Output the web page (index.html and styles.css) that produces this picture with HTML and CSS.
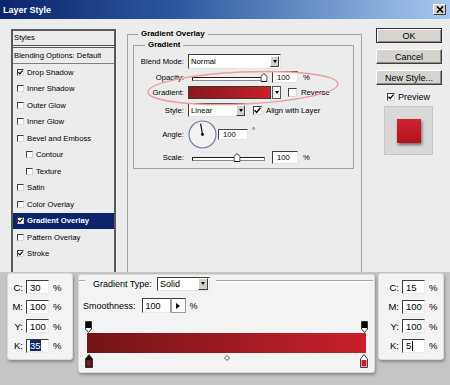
FILE: index.html
```html
<!DOCTYPE html>
<html lang="en">
<head>
    <meta charset="UTF-8">
    <meta name="viewport" content="width=device-width, initial-scale=1.0">
    <link rel="stylesheet" href="styles.css">
    <title>Layer Style - Gradient Overlay</title>
</head>
<body>

    <!-- Dialog window -->
    <div class="window">
        <div class="titlebar">
            <span>Layer Style</span>
            <span class="close-btn"><svg width="8" height="7" viewBox="0 0 8 7"><path d="M1 0.5 L7 6.5 M7 0.5 L1 6.5" stroke="#000" stroke-width="1.6"/></svg></span>
        </div>

        <div class="dialog">
            <!-- Styles list -->
            <div class="styles-list">
                <div class="list-head">Styles</div>
                <div class="list-blend">Blending Options: Default</div>
                <div class="list-item"><span class="chk"><svg width="5" height="5" viewBox="0 0 5 5"><path d="M0.4 2.2 L1.9 3.9 L4.6 0.5" fill="none" stroke="#000" stroke-width="1.2"/></svg></span>Drop Shadow</div>
                <div class="list-item"><span class="chk"></span>Inner Shadow</div>
                <div class="list-item"><span class="chk"></span>Outer Glow</div>
                <div class="list-item"><span class="chk"></span>Inner Glow</div>
                <div class="list-item"><span class="chk"></span>Bevel and Emboss</div>
                <div class="list-item sub"><span class="chk"></span>Contour</div>
                <div class="list-item sub"><span class="chk"></span>Texture</div>
                <div class="list-item"><span class="chk"></span>Satin</div>
                <div class="list-item"><span class="chk"></span>Color Overlay</div>
                <div class="list-item active"><span class="chk"><svg width="5" height="5" viewBox="0 0 5 5"><path d="M0.4 2.2 L1.9 3.9 L4.6 0.5" fill="none" stroke="#000" stroke-width="1.2"/></svg></span>Gradient Overlay</div>
                <div class="list-item"><span class="chk"></span>Pattern Overlay</div>
                <div class="list-item"><span class="chk"><svg width="5" height="5" viewBox="0 0 5 5"><path d="M0.4 2.2 L1.9 3.9 L4.6 0.5" fill="none" stroke="#000" stroke-width="1.2"/></svg></span>Stroke</div>
            </div>

            <!-- Gradient Overlay settings -->
            <fieldset class="group outer">
                <legend>Gradient Overlay</legend>
                <fieldset class="group inner">
                    <legend>Gradient</legend>

                    <div class="row row-blend">
                        <span class="lbl">Blend Mode:</span>
                        <div class="select sel-blend"><span>Normal</span><span class="drop"></span></div>
                    </div>

                    <div class="row row-opacity">
                        <span class="lbl">Opacity:</span>
                        <div class="slider slider-opacity">
                            <div class="track"></div>
                            <span class="thumb" style="left: 96%"><svg width="7" height="9" viewBox="0 0 7 9"><path d="M0.5 8.5 V3.5 L3.5 0.5 L6.5 3.5 V8.5 Z" fill="#fff" stroke="#222"/></svg></span>
                        </div>
                        <div class="field field-pct">100</div>
                        <span class="unit">%</span>
                    </div>

                    <div class="row row-gradient">
                        <span class="lbl">Gradient:</span>
                        <div class="grad-swatch"></div>
                        <span class="drop-sm"></span>
                        <span class="chk big gap-rev"></span>
                        <span class="chk-text">Reverse</span>
                    </div>

                    <div class="row row-style">
                        <span class="lbl">Style:</span>
                        <div class="select sel-style"><span>Linear</span><span class="drop"></span></div>
                        <span class="chk big gap-align"><svg width="7" height="7" viewBox="0 0 7 7"><path d="M0.6 3.2 L2.6 5.4 L6.4 0.8" fill="none" stroke="#000" stroke-width="1.4"/></svg></span>
                        <span class="chk-text">Align with Layer</span>
                    </div>

                    <div class="row row-angle">
                        <span class="lbl">Angle:</span>
                        <svg class="dial" width="29" height="29" viewBox="0 0 29 29">
                            <circle cx="14.5" cy="14.5" r="13.5" fill="#f2f2f2" stroke="#6d7fa0" stroke-width="1.2"/>
                            <path d="M14.5 14.5 L12.6 3.6" stroke="#111" stroke-width="1.2"/>
                            <circle cx="14.5" cy="14.5" r="1.4" fill="#000"/>
                        </svg>
                        <div class="field field-angle">100</div>
                        <span class="deg">°</span>
                    </div>

                    <div class="row row-scale">
                        <span class="lbl">Scale:</span>
                        <div class="slider slider-scale">
                            <div class="track"></div>
                            <span class="thumb" style="left: 62%"><svg width="7" height="9" viewBox="0 0 7 9"><path d="M0.5 8.5 V3.5 L3.5 0.5 L6.5 3.5 V8.5 Z" fill="#fff" stroke="#222"/></svg></span>
                        </div>
                        <div class="field field-scale">100</div>
                        <span class="unit">%</span>
                    </div>
                </fieldset>
            </fieldset>

            <!-- Buttons and preview -->
            <div class="side">
                <div class="btn default">OK</div>
                <div class="btn">Cancel</div>
                <div class="btn">New Style...</div>
                <div class="preview-row">
                    <span class="chk mid"><svg width="6" height="6" viewBox="0 0 6 6"><path d="M0.5 2.7 L2.2 4.6 L5.5 0.7" fill="none" stroke="#000" stroke-width="1.3"/></svg></span>
                    <span>Preview</span>
                </div>
                <div class="preview-box"><div class="preview-square"></div></div>
            </div>
        </div>
    </div>

    <!-- Colour callouts -->
    <div class="callouts">
        <div class="panel cmyk">
            <div class="cmyk-row"><span class="cl">C:</span><span class="cf">30</span><span class="cu">%</span></div>
            <div class="cmyk-row"><span class="cl">M:</span><span class="cf">100</span><span class="cu">%</span></div>
            <div class="cmyk-row"><span class="cl">Y:</span><span class="cf">100</span><span class="cu">%</span></div>
            <div class="cmyk-row"><span class="cl">K:</span><span class="cf"><span class="selected">35</span></span><span class="cu">%</span></div>
        </div>

        <div class="panel editor">
            <div class="type-row">
                <span class="rule rule-short"></span>
                <span class="type-label">Gradient Type:</span>
                <div class="select sel-type"><span>Solid</span><span class="drop drop-type"></span></div>
                <span class="rule rule-long"></span>
            </div>
            <div class="smooth-row">
                <span>Smoothness:</span>
                <div class="smooth-field">100</div>
                <span class="smooth-btn"></span>
                <span class="smooth-unit">%</span>
            </div>
            <div class="gradient-edit">
                <div class="stops">
                    <svg width="7" height="12" viewBox="0 0 7 12"><path d="M0.5 0.5 H6.5 V8 L3.5 11.5 L0.5 8 Z" fill="#fff" stroke="#333"/><rect x="1" y="1" width="5" height="6" fill="#000"/></svg>
                    <svg width="7" height="12" viewBox="0 0 7 12"><path d="M0.5 0.5 H6.5 V8 L3.5 11.5 L0.5 8 Z" fill="#fff" stroke="#333"/><rect x="1" y="1" width="5" height="6" fill="#000"/></svg>
                </div>
                <div class="gradient-bar"></div>
                <div class="stops stops-bottom">
                    <svg width="8" height="14" viewBox="0 0 8 14"><path d="M4 0.5 L7.5 5 V13.5 H0.5 V5 Z" fill="#111" stroke="#333"/><rect x="1.5" y="6" width="5" height="6.5" fill="#7e1a1d"/></svg>
                    <svg class="midpoint" width="6" height="6" viewBox="0 0 6 6"><path d="M3 0.5 L5.5 3 L3 5.5 L0.5 3 Z" fill="#fff" stroke="#555"/></svg>
                    <svg width="8" height="14" viewBox="0 0 8 14"><path d="M4 0.5 L7.5 5 V13.5 H0.5 V5 Z" fill="#fff" stroke="#444"/><rect x="1.5" y="6" width="5" height="6.5" fill="#c8202a"/></svg>
                </div>
            </div>
        </div>

        <div class="panel cmyk cmyk-right">
            <div class="cmyk-row"><span class="cl">C:</span><span class="cf">15</span><span class="cu">%</span></div>
            <div class="cmyk-row"><span class="cl">M:</span><span class="cf">100</span><span class="cu">%</span></div>
            <div class="cmyk-row"><span class="cl">Y:</span><span class="cf">100</span><span class="cu">%</span></div>
            <div class="cmyk-row"><span class="cl">K:</span><span class="cf">5<span class="caret"></span></span><span class="cu">%</span></div>
        </div>
    </div>

    <!-- Highlight ring round the gradient row -->
    <svg class="highlight-ring" width="200" height="42" viewBox="0 0 200 42">
        <ellipse cx="100" cy="21" rx="95" ry="16" transform="rotate(-2.5 100 21)" fill="none" stroke="#ec9d9d" stroke-width="1.5"/>
    </svg>

</body>
</html>
```

FILE: styles.css
```css
* {
    box-sizing: border-box;
}

body {
    margin: 0;
    width: 450px;
    height: 385px;
    overflow: hidden;
    position: relative;
    background: #c5c5c5;
    font-family: "Liberation Sans", Arial, sans-serif;
    color: #000;
}

/* Window frame */
.window {
    height: 272px;
    background: #ececec;
    overflow: hidden;
}

.titlebar {
    height: 19px;
    padding: 0 4px 0 3px;
    display: flex;
    align-items: center;
    justify-content: space-between;
    background: linear-gradient(90deg, #0a246a 0%, #2d5aa0 40%, #a6caf0 100%);
    color: #fff;
    font-size: 9px;
    font-weight: bold;
}

.close-btn {
    width: 13px;
    height: 11px;
    display: flex;
    align-items: center;
    justify-content: center;
    background: #d4d0c8;
    border: 1px solid;
    border-color: #fff #404040 #404040 #fff;
}

.dialog {
    display: flex;
    align-items: flex-start;
    font-size: 7.7px;
}

/* Styles list */
.styles-list {
    margin: 10px 0 0 11px;
    width: 105px;
    height: 270px;
    flex-shrink: 0;
    border: 2px solid #5a5a5a;
    background: #ececec;
}

.list-head {
    height: 17px;
    line-height: 14px;
    padding-left: 1px;
    border-bottom: 3px double #555;
}

.list-blend {
    height: 16px;
    line-height: 15px;
    padding-left: 1px;
    border-bottom: 1px solid #808080;
}

.list-item {
    height: 16.5px;
    display: flex;
    align-items: center;
    padding-left: 4px;
}

.list-item.sub {
    padding-left: 13px;
}

.list-item.active {
    background: #0a246a;
    color: #fff;
    font-weight: bold;
}

.chk {
    width: 7px;
    height: 7px;
    margin-right: 3px;
    flex-shrink: 0;
    display: flex;
    align-items: center;
    justify-content: center;
    background: #fff;
    border: 1px solid;
    border-color: #404040 #d8d8d8 #d8d8d8 #404040;
}

.chk.big {
    width: 9px;
    height: 9px;
    margin-right: 4px;
}

.chk.mid {
    width: 8px;
    height: 8px;
    margin-right: 3px;
}

/* Group boxes */
.group {
    margin: 0;
    padding: 0;
    min-width: 0;
    border: 1px solid #a3a3a3;
}

.group legend {
    margin-left: 10px;
    padding: 0 3px;
    font-weight: bold;
    font-size: 7.9px;
    line-height: 10px;
}

.outer {
    margin: 10px 0 0 11px;
    width: 235px;
    height: 260px;
    flex-shrink: 0;
}

.inner {
    margin: 1px 7px 0 5px;
    height: 129px;
}

.inner legend {
    margin-left: 11px;
}

.row {
    display: flex;
    align-items: center;
}

.lbl {
    width: 50px;
    margin-right: 4px;
    text-align: right;
    flex-shrink: 0;
}

.row-blend { margin-top: 3px; height: 16px; }
.row-opacity { height: 16px; }
.row-gradient { height: 15px; }
.row-style { margin-top: 2px; height: 16px; }
.row-angle { height: 32px; }
.row-scale { height: 14px; }

.select {
    height: 15px;
    display: flex;
    align-items: center;
    justify-content: space-between;
    padding: 0 1px 0 2px;
    background: #fff;
    border: 1px solid;
    border-color: #404040 #e4e4e4 #e4e4e4 #404040;
}

.sel-blend { width: 93px; }
.sel-style { width: 59px; height: 14px; }

.drop {
    width: 9px;
    height: 11px;
    display: flex;
    align-items: center;
    justify-content: center;
    background: #d4d0c8;
    border: 1px solid;
    border-color: #fff #404040 #404040 #fff;
}

.drop::after,
.drop-sm::after {
    content: "";
    border-left: 2.5px solid transparent;
    border-right: 2.5px solid transparent;
    border-top: 3px solid #000;
}

.slider {
    position: relative;
    height: 9px;
    display: flex;
    align-items: center;
    padding-top: 4px;
}

.slider-opacity { margin-left: 4px; width: 75px; }
.slider-scale { margin-left: 4px; width: 73px; }

.track {
    width: 100%;
    height: 4px;
    background: #fff;
    border: 1px solid;
    border-color: #1e1e1e #8a8a8a #8a8a8a #1e1e1e;
}

.thumb {
    position: absolute;
    top: 0;
    transform: translateX(-50%);
    display: flex;
}

.field {
    height: 12px;
    display: flex;
    align-items: center;
    padding-left: 4px;
    background: #fff;
    border: 1px solid;
    border-color: #404040 #e4e4e4 #e4e4e4 #404040;
}

.field-pct { margin-left: 5px; width: 26px; }
.field-angle { margin-left: 1px; width: 30px; height: 11px; }
.field-scale { margin-left: 7px; width: 26px; height: 13px; }

.unit {
    margin-left: 5px;
}

.grad-swatch {
    width: 83px;
    height: 13px;
    border: 1px solid #3a3a3a;
    background: linear-gradient(90deg, #8a191e 0%, #a61b22 50%, #cc2029 100%);
}

.drop-sm {
    width: 9px;
    height: 13px;
    margin-left: 1px;
    display: flex;
    align-items: center;
    justify-content: center;
    background: #f6f6f6;
    border: 1px solid #5a5a5a;
}

.gap-rev { margin-left: 7px; }
.gap-align { margin-left: 6px; }

.deg {
    align-self: flex-start;
    margin: 8px 0 0 4px;
}

/* Buttons column */
.side {
    margin: 9px 0 0 14px;
    width: 66px;
    display: flex;
    flex-direction: column;
    font-size: 9px;
}

.btn {
    height: 15px;
    margin-bottom: 6px;
    display: flex;
    align-items: center;
    justify-content: center;
    background: #d6d3ce;
    border: 1px solid;
    border-color: #fff #404040 #404040 #fff;
    box-shadow: inset -1px -1px 0 #8a8a8a;
}

.btn.default {
    border-color: #303030;
    box-shadow: inset 1px 1px 0 #fff, inset -1px -1px 0 #8a8a8a;
}

.preview-row {
    margin: 1px 0 0 11px;
    height: 9px;
    display: flex;
    align-items: center;
}

.preview-box {
    margin: 5px 0 0 8px;
    width: 49px;
    height: 49px;
    display: flex;
    align-items: center;
    justify-content: center;
    background: #d9d9d9;
    border: 1px solid #c6c6c6;
}

.preview-square {
    width: 24px;
    height: 24px;
    background: linear-gradient(#cc2630, #b8131b);
    box-shadow: 1px 2px 3px rgba(0, 0, 0, 0.5);
}

/* Callout panels */
.callouts {
    display: flex;
    align-items: flex-start;
    padding: 1px 0 0 7px;
}

.panel {
    background: #f3f3f3;
    border: 1px solid #dadada;
    border-radius: 3px;
    box-shadow: 1px 2px 3px rgba(0, 0, 0, 0.3);
}

.cmyk {
    width: 66px;
    height: 87px;
    padding: 6px 0 0 0;
    display: flex;
    flex-direction: column;
    gap: 5.5px;
    font-size: 9.5px;
}

.cmyk-right {
    margin-left: 3px;
}

.cmyk-row {
    height: 14px;
    display: flex;
    align-items: center;
}

.cl {
    width: 15px;
    margin-right: 3px;
    text-align: right;
}

.cmyk-right .cl {
    width: 20px;
}

.cf {
    width: 23px;
    height: 14px;
    padding-left: 3px;
    display: flex;
    align-items: center;
    background: #fff;
    border: 1px solid;
    border-color: #3c3c3c #eaeaea #eaeaea #3c3c3c;
}

.cu {
    margin-left: 4px;
}

.selected {
    background: #0a246a;
    color: #fff;
    line-height: 11px;
}

.caret {
    width: 1px;
    height: 10px;
    margin-left: 1px;
    background: #000;
}

/* Gradient editor */
.editor {
    margin: 1px 0 0 5px;
    width: 297px;
    height: 99px;
    font-size: 9px;
}

.type-row {
    height: 17px;
    display: flex;
    align-items: center;
}

.rule {
    align-self: flex-start;
    margin-top: 5px;
    height: 2px;
    border-top: 1px solid #a5a5a5;
    border-bottom: 1px solid #fff;
}

.rule-short { width: 6px; }
.rule-long { flex: 1; margin-left: 6px; margin-right: 1px; }

.type-label {
    margin-left: 8px;
}

.sel-type {
    margin-left: 5px;
    width: 53px;
    height: 14px;
}

.drop-type {
    width: 10px;
    height: 12px;
}

.smooth-row {
    margin-top: 6px;
    height: 15px;
    padding-left: 4px;
    display: flex;
    align-items: center;
}

.smooth-field {
    margin-left: 6px;
    width: 29px;
    height: 15px;
    padding-left: 3px;
    display: flex;
    align-items: center;
    background: #fff;
    border: 1px solid;
    border-color: #3c3c3c #9a9a9a #eaeaea #3c3c3c;
}

.smooth-btn {
    width: 15px;
    height: 15px;
    display: flex;
    align-items: center;
    justify-content: center;
    background: #fbfbfb;
    border: 1px solid;
    border-color: #3c3c3c #9a9a9a #9a9a9a #9a9a9a;
}

.smooth-btn::after {
    content: "";
    border-top: 3px solid transparent;
    border-bottom: 3px solid transparent;
    border-left: 4px solid #000;
}

.smooth-unit {
    margin-left: 4px;
}

.gradient-edit {
    margin-top: 8px;
    padding: 0 8px;
}

.stops {
    display: flex;
    justify-content: space-between;
    margin: 0 -2px 0 -2px;
}

.stops svg {
    display: block;
}

.stops-bottom {
    margin-top: 1px;
    align-items: flex-start;
}

.midpoint {
    margin-top: 1px;
}

.gradient-bar {
    height: 20px;
    background: linear-gradient(90deg, #741418 0%, #9c1a20 50%, #cc2029 100%);
}

/* Annotation ring drawn over the dialog */
.highlight-ring {
    position: absolute;
    left: 143px;
    top: 67px;
}
```
